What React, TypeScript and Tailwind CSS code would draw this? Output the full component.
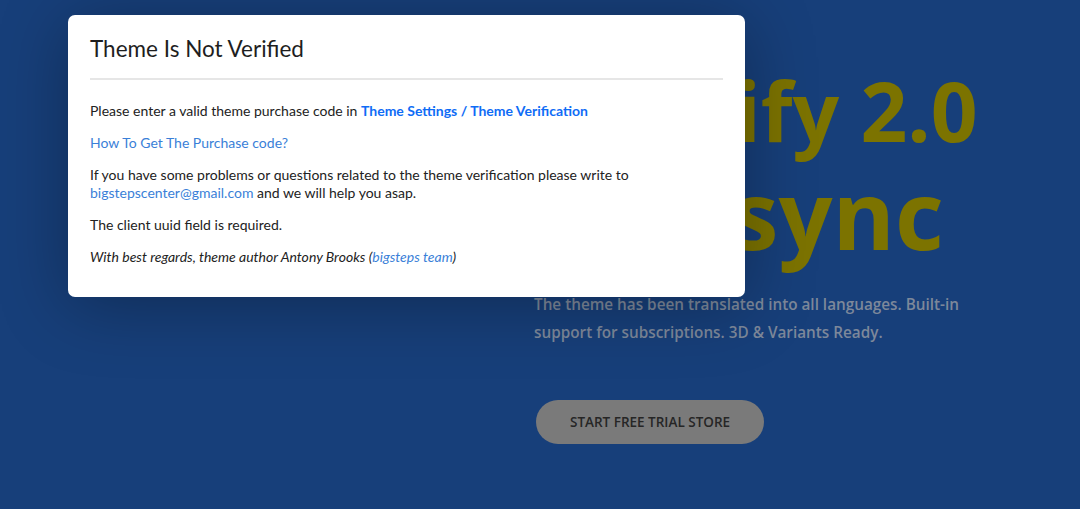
import React from "react";

const Hero = () => {
    return <div className="grid grid-cols-[534px_1fr] min-h-[509px] bg-[#173f7a]">
        <div/>
        <div className="flex flex-col pt-[62px] font-['Open_Sans',sans-serif]">
            <h1 className="font-bold text-[#7c7300] leading-none">
                <div className="text-[82px] leading-[96px] whitespace-nowrap">Shopify 2.0</div>
                <div className="text-[95px] leading-[110px] whitespace-nowrap">Full sync</div>
            </h1>
            <p className="mt-[22px] w-[450px] text-[15.3px] leading-[28px] font-semibold text-[#7d889a]">
                The theme has been translated into all languages. Built-in support for subscriptions. 3D &amp; Variants Ready.
            </p>
            <div className="mt-[54px]">
                <button className="h-[44px] px-[34px] rounded-full bg-[#7a7a7a] text-[13.5px] font-semibold text-[#262626] uppercase ml-[2px]">
                    Start free trial store
                </button>
            </div>
        </div>
    </div>
}

const Modal = () => {
    return <div className="absolute left-[68px] top-[15px] w-[677px] bg-white rounded-[7px] shadow-[0_8px_70px_rgba(0,0,0,0.3)] font-['Lato',sans-serif] text-[#222] px-[22px] pt-[21px] pb-[31px]">
        <h2 className="text-[22.5px] leading-[26px] text-[#1e1e1e]">Theme Is Not Verified</h2>
        <div className="h-[2px] bg-[#e6e6e6] mt-[16px] mb-[22px]"/>
        <div className="text-[14px] leading-[18px] flex flex-col gap-[14px]">
            <p>Please enter a valid theme purchase code in <a className="font-bold text-[#0f6cf6]">Theme Settings / Theme Verification</a></p>
            <p><a className="text-[#3a7fd8]">How To Get The Purchase code?</a></p>
            <p>If you have some problems or questions related to the theme verification please write to <br/>
                <a className="text-[#3a7fd8]">bigstepscenter@gmail.com</a> and we will help you asap.</p>
            <p>The client uuid field is required.</p>
            <p className="italic">With best regards, theme author Antony Brooks (<a className="text-[#3a7fd8]">bigsteps team</a>)</p>
        </div>
    </div>
}

export default function App() {
    return <div className="relative w-[1080px] h-[509px] overflow-hidden">
        <Hero/>
        <Modal/>
    </div>
}
